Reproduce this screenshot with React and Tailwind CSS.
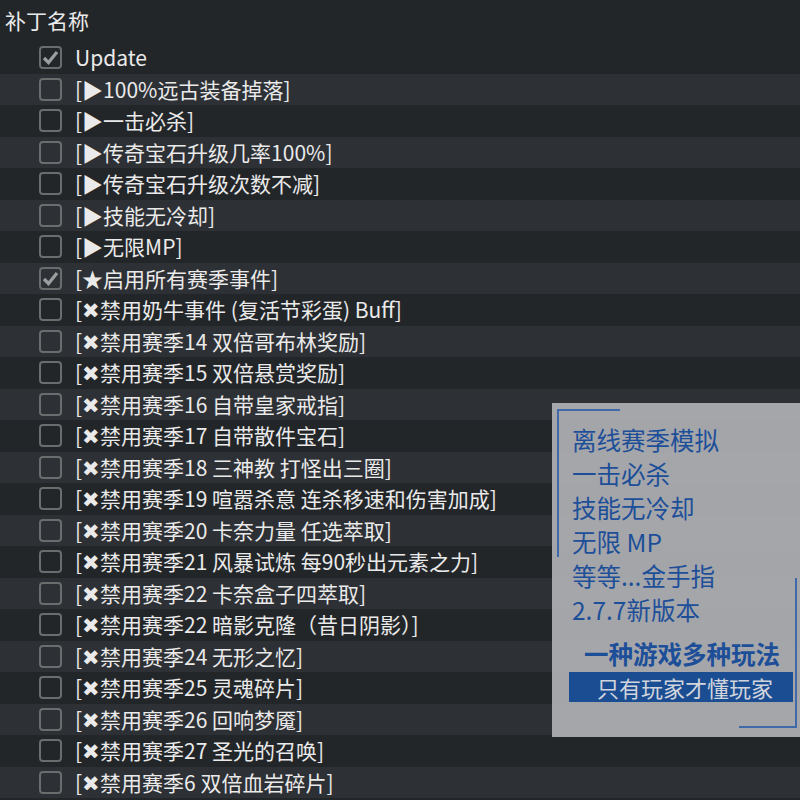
import React from 'react';

const patches = [
  { name: 'Update', checked: true },
  { name: '[▶100%远古装备掉落]' },
  { name: '[▶一击必杀]' },
  { name: '[▶传奇宝石升级几率100%]' },
  { name: '[▶传奇宝石升级次数不减]' },
  { name: '[▶技能无冷却]' },
  { name: '[▶无限MP]' },
  { name: '[★启用所有赛季事件]', checked: true },
  { name: '[✖禁用奶牛事件 (复活节彩蛋) Buff]' },
  { name: '[✖禁用赛季14 双倍哥布林奖励]' },
  { name: '[✖禁用赛季15 双倍悬赏奖励]' },
  { name: '[✖禁用赛季16 自带皇家戒指]' },
  { name: '[✖禁用赛季17 自带散件宝石]' },
  { name: '[✖禁用赛季18 三神教 打怪出三圈]' },
  { name: '[✖禁用赛季19 喧嚣杀意 连杀移速和伤害加成]' },
  { name: '[✖禁用赛季20 卡奈力量 任选萃取]' },
  { name: '[✖禁用赛季21 风暴试炼 每90秒出元素之力]' },
  { name: '[✖禁用赛季22 卡奈盒子四萃取]' },
  { name: '[✖禁用赛季22 暗影克隆（昔日阴影）]' },
  { name: '[✖禁用赛季24 无形之忆]' },
  { name: '[✖禁用赛季25 灵魂碎片]' },
  { name: '[✖禁用赛季26 回响梦魇]' },
  { name: '[✖禁用赛季27 圣光的召唤]' },
  { name: '[✖禁用赛季6 双倍血岩碎片]' },
];

const features = ['离线赛季模拟', '一击必杀', '技能无冷却', '无限 MP', '等等...金手指', '2.7.7新版本'];

function CheckBox({ checked }) {
  return (
    <div className="w-[23px] h-[23px] shrink-0 rounded-[4px] border-2 border-[#6b6c6e] flex items-center justify-center">
      {checked && (
        <svg width="17" height="15" viewBox="0 0 17 15">
          <path d="M2 8 L6.5 12.5 L15 2" fill="none" stroke="#9c9d9f" strokeWidth="3.2" strokeLinejoin="miter" />
        </svg>
      )}
    </div>
  );
}

function PromoPanel() {
  return (
    <div className="absolute left-[552px] top-[403px] w-[248px] h-[334px] bg-[#b2b4b7]/90 pl-[17px] pr-[7px] pt-[20px]">
      {/* corner brackets */}
      <div className="absolute left-[5px] top-[6px] w-[63px] h-[148px] border-l-2 border-t-2 border-[#3f69a8]" />
      <div className="absolute right-[3px] bottom-[9px] w-[58px] h-[150px] border-r-2 border-b-2 border-[#3f69a8]" />
      <div className="relative text-[#1d4f99] text-[24.5px] leading-[34px] pl-[3px]">
        {features.map((f) => (
          <div key={f}>{f}</div>
        ))}
      </div>
      <div className="relative mt-[10px] text-center text-[#1d4f99] text-[24.5px] font-bold leading-[34px] pl-[2px]">
        一种游戏多种玩法
      </div>
      <div className="relative mt-[1px] h-[30px] bg-[#1b4d93] text-[#d1d5dc] text-[22px] leading-[30px] text-center pl-[8px]">
        只有玩家才懂玩家
      </div>
    </div>
  );
}

export default function App() {
  return (
    <div
      className="relative w-[800px] h-[800px] overflow-hidden bg-[#232629] text-[#eaeaea]"
      style={{ fontFamily: '"Noto Sans CJK SC", "Noto Sans", sans-serif' }}
    >
      <div className="h-[42px] flex items-center pl-[5px] text-[21px]">补丁名称</div>
      {patches.map((p, i) => (
        <div
          key={i}
          className={`h-[31.5px] flex items-center pl-[39px] gap-[13px] text-[21px] ${
            i % 2 === 0 ? 'bg-[#232629]' : 'bg-[#2d3034]'
          }`}
        >
          <CheckBox checked={p.checked} />
          <span className="whitespace-nowrap">{p.name}</span>
        </div>
      ))}
      <PromoPanel />
    </div>
  );
}
